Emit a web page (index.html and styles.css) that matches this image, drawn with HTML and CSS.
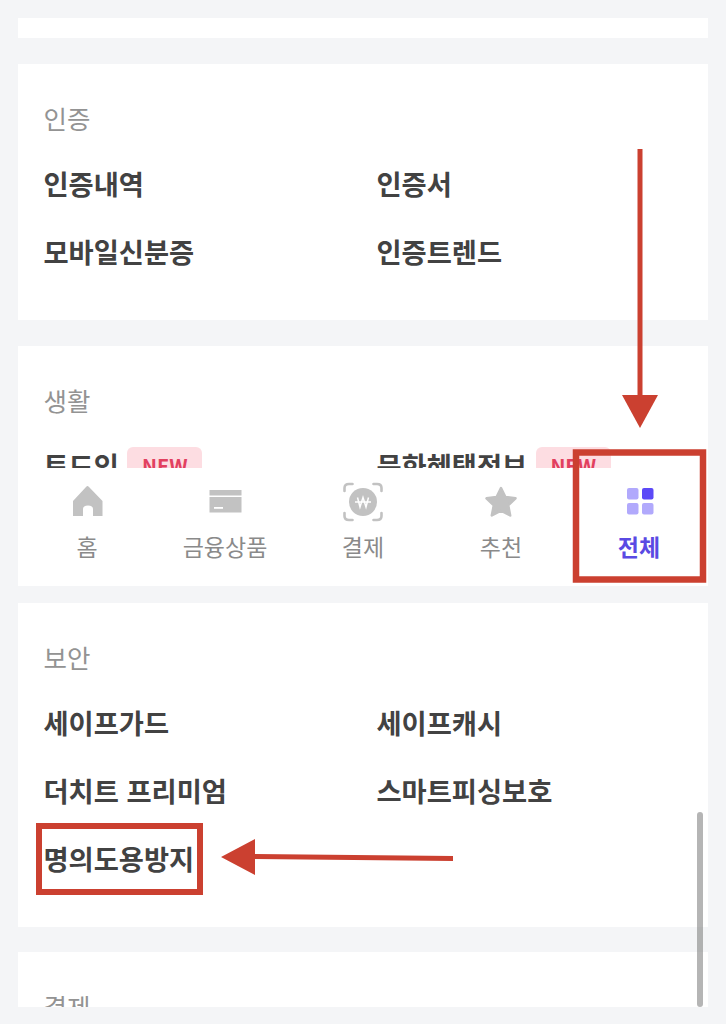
FILE: index.html
```html
<!DOCTYPE html>
<html lang="ko">
<head>
<meta charset="utf-8">
<title>전체 메뉴</title>
<link rel="stylesheet" href="styles.css">
</head>
<body>
<div class="page">
  <div class="upper">
    <section class="card card-stub"></section>
    <section class="card card-auth">
      <h2 class="heading">인증</h2>
      <div class="items">
        <a class="item">인증내역</a>
        <a class="item">인증서</a>
        <a class="item">모바일신분증</a>
        <a class="item">인증트렌드</a>
      </div>
    </section>
    <section class="card card-life">
      <h2 class="heading">생활</h2>
      <div class="items">
        <a class="item">토드인<span class="new">NEW</span></a>
        <a class="item">문화혜택정보<span class="new">NEW</span></a>
      </div>
    </section>
  </div>
  <nav class="nav">
    <a class="tab">
      <svg class="icon" viewBox="0 0 40 40"><path fill="#c2c2c2" d="M20.5 4 Q21 4 22 5 L35.5 19 V34 H26 V27 Q26 23.5 21 23.5 Q16 23.5 16 27 V34 H6 V19 L19 5 Q20 4 20.5 4 Z"/></svg>
      <span>홈</span>
    </a>
    <a class="tab">
      <svg class="icon" viewBox="0 0 40 40"><path fill="#c2c2c2" d="M4.5 8 H36.5 V13.5 H4.5 Z M4.5 15 H36.5 V30.5 H4.5 Z"/><rect x="9" y="25" width="9" height="1.8" fill="#fff"/></svg>
      <span>금융상품</span>
    </a>
    <a class="tab">
      <svg class="icon" viewBox="0 0 40 40"><g fill="none" stroke="#c2c2c2" stroke-width="2.6" stroke-linecap="round"><path d="M1.5 9 V6 Q1.5 2 6 2 H9.5 M30.5 2 H34 Q38.5 2 38.5 6 V9 M1.5 31 V34 Q1.5 38 6 38 H9.5 M30.5 38 H34 Q38.5 38 38.5 34 V31"/></g><circle cx="20" cy="20" r="14" fill="#c2c2c2"/><path fill="none" stroke="#fff" stroke-width="1.5" d="M14.5 15.5 L17 25 L20 15.5 L23 25 L25.5 15.5 M12 20 H28"/></svg>
      <span>결제</span>
    </a>
    <a class="tab">
      <svg class="icon" viewBox="0 0 40 40"><path fill="#c2c2c2" stroke="#c2c2c2" stroke-width="2.5" stroke-linejoin="round" d="M20 6 L24.4 15 L34.5 16.3 L27.2 23.3 L29.2 33.5 L20 28.6 L10.8 33.5 L12.8 23.3 L5.5 16.3 L15.6 15 Z"/></svg>
      <span>추천</span>
    </a>
    <a class="tab tab-active">
      <svg class="icon" viewBox="0 0 40 40"><rect x="8" y="6" width="11.5" height="11.5" rx="2" fill="#b1a9fc"/><rect x="23" y="6" width="11.5" height="11.5" rx="2" fill="#5c49f7"/><rect x="8" y="21" width="11.5" height="11.5" rx="2" fill="#b1a9fc"/><rect x="23" y="21" width="11.5" height="11.5" rx="2" fill="#b1a9fc"/></svg>
      <span>전체</span>
    </a>
  </nav>
  <div class="lower">
    <section class="card card-sec">
      <h2 class="heading">보안</h2>
      <div class="items">
        <a class="item">세이프가드</a>
        <a class="item">세이프캐시</a>
        <a class="item">더치트 프리미엄</a>
        <a class="item">스마트피싱보호</a>
        <a class="item">명의도용방지</a>
      </div>
    </section>
    <section class="card card-pay">
      <h2 class="heading">결제</h2>
    </section>
  </div>
  <div class="scrollbar"></div>
  <svg class="marks" viewBox="0 0 726 1024" aria-hidden="true">
    <rect x="576" y="452.5" width="127" height="127" fill="none" stroke="#cb4030" stroke-width="6.5"/>
    <rect x="39" y="826" width="161" height="66" fill="none" stroke="#cb4030" stroke-width="6"/>
    <rect x="637.5" y="149" width="5" height="250" fill="#cb4030"/>
    <path d="M622 395 H658 L640 428 Z" fill="#cb4030"/>
    <path d="M221 857 L255 839 V854 L453 856 V861 L255 859 V875 Z" fill="#cb4030"/>
  </svg>
</div>
</body>
</html>
```
FILE: styles.css
```css
* { box-sizing: border-box; }
html, body { margin: 0; padding: 0; }
body { background: #f4f5f7; font-family: "Noto Sans CJK KR", "Noto Sans", sans-serif; }
.page { position: relative; width: 726px; height: 1024px; overflow: hidden; padding: 18px 18px 0; background: #f4f5f7; }
.upper { height: 450px; overflow: hidden; }
.card { background: #fff; padding: 0 26px; }
.card-stub { height: 20px; margin-bottom: 26px; }
.card-auth { height: 256px; margin-bottom: 26px; }
.card-life { height: 200px; }
.heading { margin: 0 0 0 -0.5px; height: 87px; padding-top: 35px; font-size: 25.5px; line-height: 38px; font-weight: 400; color: #939393; }
.items { display: grid; grid-template-columns: 333px 1fr; grid-auto-rows: 68px; margin-left: -0.5px; }
.item { display: flex; align-items: center; height: 68px; margin-top: -2px; font-size: 27.3px; font-weight: 700; color: #424242; white-space: nowrap; }
.new { display: inline-flex; align-items: center; justify-content: center; width: 75px; height: 36px; margin-left: 8.5px; border-radius: 6px; background: #fddde2; color: #e2405f; font-size: 20px; font-weight: 700; }
.nav { display: grid; grid-template-columns: repeat(5, 1fr); height: 118px; background: #fff; }
.tab { display: flex; flex-direction: column; align-items: center; padding-top: 14px; font-size: 23px; line-height: 34px; color: #8a8a8a; }
.tab-active { color: #5a4ae3; font-weight: 700; }
.icon { display: block; width: 40px; height: 40px; margin-bottom: 7px; }
.lower { height: 404px; margin-top: 17px; overflow: hidden; }
.card-sec { height: 324px; margin-bottom: 25px; }
.card-pay { height: 120px; }
.scrollbar { position: absolute; left: 697px; top: 812px; width: 6px; height: 195px; border-radius: 3px; background: rgba(120,120,120,.55); }
.marks { position: absolute; left: 0; top: 0; width: 726px; height: 1024px; pointer-events: none; }
```
